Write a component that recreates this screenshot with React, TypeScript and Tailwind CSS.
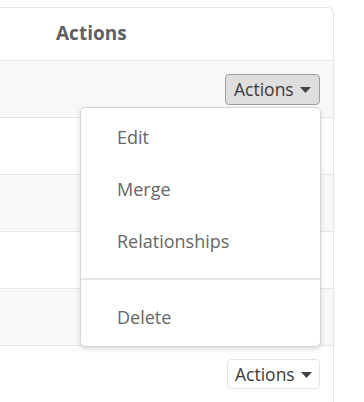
import React from "react";

const font = { fontFamily: '"Open Sans", "Liberation Sans", sans-serif' };

const Caret = () => (
  <svg width="11" height="6" viewBox="0 0 11 6" className="ml-[6px] mt-[2px]">
    <path d="M0 0h11L5.5 6z" fill="#444" />
  </svg>
);

const ActionsButton = ({ active }: { active?: boolean }) => (
  <button
    className={
      active
        ? "flex items-center h-[31px] w-[95px] pl-[8px] rounded-[4px] border border-[#9d9d9d] bg-[#dedede] text-[17.5px] text-[#3a3a3a]"
        : "flex items-center h-[30px] w-[93px] pl-[7px] rounded-[4px] border border-[#e4e4e4] bg-white text-[17.5px] text-[#3a3a3a]"
    }
  >
    Actions
    <Caret />
  </button>
);

const rows = [true, false, true, false, true, false];

export default function App() {
  return (
    <div className="relative w-[364px] h-[402px] overflow-hidden bg-white pt-[7px]" style={font}>
      <div className="-ml-2 mr-[30px] border-t border-r border-[#e6e6e6] rounded-tr-[6px]">
        <div className="h-[53px] border-b border-[#e6e6e6] flex items-center pl-[64px] pb-[2px]">
          <span className="text-[19px] font-bold text-[#5f5f5f]">Actions</span>
        </div>
        {rows.map((gray, i) => (
          <div
            key={i}
            className={
              (gray ? "bg-[#f8f8f8] " : "bg-white ") +
              "h-[57px] border-b border-[#e6e6e6] flex items-center justify-end pr-[13px]"
            }
          >
            {i === 0 && <ActionsButton active />}
            {i === 5 && <ActionsButton />}
          </div>
        ))}
      </div>

      <div className="absolute left-[80px] top-[107px] w-[241px] rounded-[5px] border border-[#d6d6d6] bg-white py-[3px] shadow-[0_2px_5px_rgba(0,0,0,0.15)] text-[18px] text-[#666]">
        <div className="h-[52px] flex items-center pl-[36px]">Edit</div>
        <div className="h-[52px] flex items-center pl-[36px]">Merge</div>
        <div className="h-[52px] flex items-center pl-[36px]">Relationships</div>
        <div className="my-[11px] h-[2px] bg-[#e6e6e6]" />
        <div className="h-[52px] flex items-center pl-[36px]">Delete</div>
      </div>
    </div>
  );
}
